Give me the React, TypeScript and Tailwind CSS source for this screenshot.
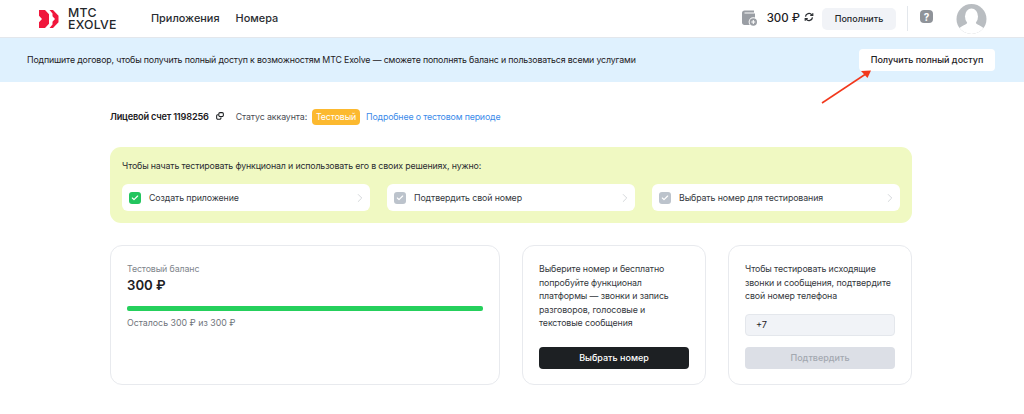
import React from "react";
import { ChevronRight, Check } from "lucide-react";

function Logo() {
  return (
    <svg width="20" height="18" viewBox="0 0 20 18" className="shrink-0">
      <path d="M0 0h6l4 4.200v9.600L6 18H0v-5.700L3 9 0 5.700z" fill="#f0173c" />
      <path d="M10.500 0H14l5.500 5.700v6.600L14 18h-3.500l3-3.500v-2.700L16 9l-2.500-2.800V3.500z" fill="#f0173c" />
    </svg>
  );
}

function WalletIcon() {
  return (
    <svg width="16" height="17" viewBox="0 0 16 17" className="shrink-0">
      <path d="M0 3C0 1.500 1 .5 2.500 .5H12V2.500H2.500v1H13V15H2.500C1 15 0 14 0 12.500z" fill="#9a9ea4" />
      <circle cx="11.300" cy="12" r="4.700" fill="#fff" />
      <circle cx="11.300" cy="12" r="3.700" fill="#9a9ea4" />
      <path d="M11.300 10v4M9.300 12h4" stroke="#fff" strokeWidth="1.100" />
    </svg>
  );
}

function Refresh() {
  return (
    <svg width="10" height="10" viewBox="0 0 12 12" fill="none" stroke="#2a2d31" strokeWidth="1.500" className="shrink-0">
      <path d="M1.800 5.500a4.200 4.200 0 0 1 7.600-2" />
      <path d="M10.200 6.500a4.200 4.200 0 0 1-7.600 2" />
      <path d="M7.500 4h3V1.500" />
      <path d="M4.500 8h-3v2.500" />
    </svg>
  );
}

function CopyIcon() {
  return (
    <svg width="8" height="8" viewBox="0 0 10 10" fill="none" stroke="#1d2023" strokeWidth="1.300" className="shrink-0">
      <rect x="3.500" y="0.800" width="5.700" height="4.700" rx="1.500" />
      <path d="M3 3.500H2A1.400 1.400 0 0 0 .8 5v2.500A1.500 1.500 0 0 0 2.300 9h2.400a1.500 1.500 0 0 0 1.500-1.500V6.500" />
    </svg>
  );
}

function Avatar() {
  return (
    <svg width="31" height="30" viewBox="0 0 31 30" className="shrink-0">
      <clipPath id="av"><circle cx="15.500" cy="15" r="15" /></clipPath>
      <g clipPath="url(#av)">
        <rect width="31" height="30" fill="#b9bdc1" />
        <ellipse cx="15.500" cy="12.500" rx="6.500" ry="8" fill="#fff" />
        <path d="M11.500 18c0 3-8 3.500-9.500 8.500v4h27v-4c-1.500-5-9.500-5.500-9.500-8.500z" fill="#fff" />
      </g>
    </svg>
  );
}

function Step({ label, done }: { label: string; done?: boolean }) {
  return (
    <div className="flex h-[27px] flex-1 items-center rounded-[6px] bg-white pl-[7px] pr-[3px]">
      <span className={`flex h-[12px] w-[12px] items-center justify-center rounded-[3px] ${done ? "bg-[#22c55e]" : "bg-[#bcc3cc]"}`}>
        <Check size={8} color="#fff" strokeWidth={3.500} />
      </span>
      <span className="ml-[8px] flex-1 text-[8.800px] leading-[14px] tracking-[-0.1px] text-[#34383d]">{label}</span>
      <ChevronRight size={14} color="#c3c7cc" strokeWidth={1.200} />
    </div>
  );
}

export default function App() {
  return (
    <div className="relative h-[414px] w-[1024px] overflow-hidden bg-white text-[#1d2023] [font-family:Inter,'Liberation_Sans',sans-serif]">
      <header className="flex h-[38px] items-center border-b border-[#e3e7ec] pl-[39px] pr-[37px]">
        <Logo />
        <div className="ml-[9px] w-[55px] text-[12.300px] font-medium leading-[12px] tracking-[0.25px] text-[#24272b]">
          <div>МТС</div>
          <div>EXOLVE</div>
        </div>
        <nav className="ml-[28px] flex gap-[16px] text-[10.900px] font-medium text-[#2a2d31]">
          <span>Приложения</span>
          <span>Номера</span>
        </nav>
        <div className="ml-auto flex items-center">
          <WalletIcon />
          <span className="ml-[9px] text-[11.500px] font-medium">300 ₽</span>
          <span className="mb-[3px] ml-[4px]"><Refresh /></span>
          <button className="ml-[8px] flex h-[22px] w-[74px] items-center justify-center rounded-[5px] bg-[#f1f3f7] text-[9px] font-medium text-[#24272b]">Пополнить</button>
          <div className="ml-[11px] h-[25px] w-px bg-[#e3e7ec]" />
          <div className="mb-[4px] ml-[12px] flex h-[13px] w-[13px] items-center justify-center rounded-[4px] bg-[#8f9399] text-[10px] font-bold leading-none text-white">?</div>
          <div className="ml-[23px]"><Avatar /></div>
        </div>
      </header>

      <section className="flex h-[44px] items-center justify-between bg-[#dff1fe] pl-[27px] pr-[29px]">
        <p className="text-[8.800px] tracking-[-0.15px] text-[#1d2023]">Подпишите договор, чтобы получить полный доступ к возможностям МТС Exolve — сможете пополнять баланс и пользоваться всеми услугами</p>
        <button className="flex h-[22px] w-[136px] items-center justify-center rounded-[4px] bg-white text-[9px] font-medium text-[#1d2023]">Получить полный доступ</button>
      </section>

      <main className="ml-[110px] w-[802px]">
        <div className="flex h-[65px] items-center pt-[4px]">
          <span className="text-[9.200px] font-semibold tracking-[-0.2px]">Лицевой счет 1198256</span>
          <span className="mb-[2px] ml-[7px]"><CopyIcon /></span>
          <span className="ml-[12px] text-[8.800px] tracking-[-0.1px] text-[#4a4e54]">Статус аккаунта:</span>
          <span className="ml-[5px] flex h-[16px] w-[48px] items-center justify-center rounded-[4px] bg-[#fcb92f] text-[8.800px] tracking-[-0.1px] text-white">Тестовый</span>
          <span className="ml-[6px] text-[8.800px] tracking-[-0.15px] text-[#3b8bea]">Подробнее о тестовом периоде</span>
        </div>

        <section className="rounded-[11px] bg-[#f0f9c2] p-[12px]">
          <p className="text-[8.800px] leading-[14px] tracking-[-0.15px] text-[#2a2d31]">Чтобы начать тестировать функционал и использовать его в своих решениях, нужно:</p>
          <div className="mt-[11px] flex gap-[17px]">
            <Step label="Создать приложение" done />
            <Step label="Подтвердить свой номер" />
            <Step label="Выбрать номер для тестирования" />
          </div>
        </section>

        <div className="mt-[22px] flex h-[140px] gap-[22px]">
          <section className="w-[390px] rounded-[12px] border border-[#e8eaee] px-[16px] pt-[16px]">
            <p className="text-[8.800px] leading-[14px] tracking-[-0.1px] text-[#80858c]">Тестовый баланс</p>
            <p className="text-[13.200px] font-semibold leading-[18px] text-[#1d2023]">300 ₽</p>
            <div className="mt-[12px] h-[5px] rounded-[2px] bg-[#25d05c]" />
            <p className="mt-[5px] text-[8.800px] leading-[14px] text-[#6f747b]">Осталось 300 ₽ из 300 ₽</p>
          </section>

          <section className="flex w-[184px] flex-col rounded-[12px] border border-[#e8eaee] px-[16px] pt-[16px]">
            <p className="text-[8.800px] leading-[13.600px] tracking-[-0.1px] text-[#34383d]">Выберите номер и бесплатно попробуйте функционал платформы — звонки и запись разговоров, голосовые и текстовые сообщения</p>
            <button className="mt-[17px] flex h-[22px] items-center justify-center rounded-[4px] bg-[#1d2023] text-[9px] font-medium text-white">Выбрать номер</button>
          </section>

          <section className="flex flex-1 flex-col rounded-[12px] border border-[#e8eaee] px-[16px] pt-[16px]">
            <p className="text-[8.800px] leading-[13.600px] tracking-[-0.1px] text-[#34383d]">Чтобы тестировать исходящие звонки и сообщения, подтвердите свой номер телефона</p>
            <div className="mt-[11px] flex h-[22px] items-center rounded-[4px] border border-[#e4e7ec] bg-[#f1f3f7] pl-[10px] text-[9.200px] text-[#1d2023]">+7</div>
            <button className="mt-[11px] flex h-[22px] items-center justify-center rounded-[4px] bg-[#dcdfe6] text-[9px] font-medium text-[#a3a8b0]">Подтвердить</button>
          </section>
        </div>
      </main>

      <svg width="60" height="50" viewBox="0 0 60 50" className="absolute left-[815px] top-[68px]">
        <path d="M7 35 L50 6.500" stroke="#f2381c" strokeWidth="1.500" fill="none" />
        <path d="M56 2.500 L46 3 L52.500 10z" fill="#f2381c" />
      </svg>
    </div>
  );
}
